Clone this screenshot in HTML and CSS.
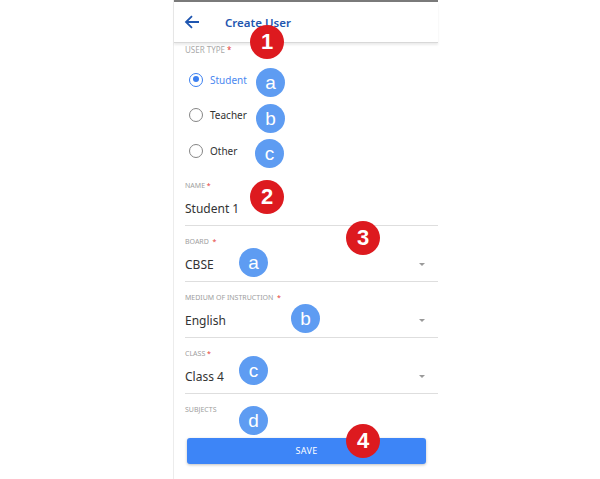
FILE: index.html
```html
<!DOCTYPE html>
<html>
<head>
<meta charset="utf-8">
<link rel="stylesheet" href="styles.css">
</head>
<body>
<div class="phone">
  <div class="topbar"></div>
  <header class="header">
    <svg class="back" width="16" height="14" viewBox="0 0 16 14"><path d="M15 7H2.5M8 1.2L2 7l6 5.8" fill="none" stroke="#1f56b0" stroke-width="1.8"/></svg>
    <span class="title">Create User</span>
  </header>
  <main class="content">
    <div class="group-label">USER TYPE <span class="req">*</span></div>
    <div class="radio-row"><span class="radio on"></span><span class="radio-text sel">Student</span></div>
    <div class="radio-row"><span class="radio"></span><span class="radio-text">Teacher</span></div>
    <div class="radio-row"><span class="radio"></span><span class="radio-text">Other</span></div>

    <div class="field first">
      <div class="flabel">NAME <span class="req">*</span></div>
      <div class="fvalue">Student 1</div>
    </div>
    <div class="field">
      <div class="flabel">BOARD &nbsp;<span class="req">*</span></div>
      <div class="fvalue">CBSE<span class="caret"></span></div>
    </div>
    <div class="field">
      <div class="flabel">MEDIUM OF INSTRUCTION &nbsp;<span class="req">*</span></div>
      <div class="fvalue">English<span class="caret"></span></div>
    </div>
    <div class="field">
      <div class="flabel">CLASS <span class="req">*</span></div>
      <div class="fvalue">Class 4<span class="caret"></span></div>
    </div>
    <div class="flabel subjects">SUBJECTS</div>
    <button class="save">SAVE</button>
  </main>

  <span class="badge red" style="left:250px;top:25px">1</span>
  <span class="badge blue" style="left:256px;top:68px">a</span>
  <span class="badge blue" style="left:256px;top:104px">b</span>
  <span class="badge blue" style="left:255px;top:139px">c</span>
  <span class="badge red" style="left:250px;top:180px">2</span>
  <span class="badge red" style="left:346px;top:221px">3</span>
  <span class="badge blue" style="left:239px;top:248px">a</span>
  <span class="badge blue" style="left:291px;top:304px">b</span>
  <span class="badge blue" style="left:239px;top:356px">c</span>
  <span class="badge blue" style="left:239px;top:406px">d</span>
  <span class="badge red" style="left:346px;top:424px">4</span>
</div>
</body>
</html>
```
FILE: styles.css
```css
* { box-sizing: border-box; }
html, body { margin: 0; padding: 0; background: #fff; }
body { font-family: "Noto Sans", "Open Sans", sans-serif; width: 600px; height: 479px; overflow: hidden; }
.phone { margin-left: 173px; width: 265px; height: 479px; border-left: 1px solid #ececec; }
.topbar { height: 2px; background: #7a7a7a; }
.header {
  height: 41px; display: flex; align-items: center; padding-left: 10px;
  border-bottom: 1px solid #d8d8d8; box-shadow: 0 2px 2px rgba(0,0,0,0.08);
}
.title { margin-left: 25px; font-size: 11.5px; font-weight: 600; color: #1f56b0; }
.content { padding-left: 11px; }
.group-label { margin-top: 1px; height: 12px; line-height: 12px; font-size: 8px; color: #a8a8a8; }
.req { color: #e53935; }
.radio-row { height: 35.5px; display: flex; align-items: center; padding-left: 4px; }
.group-label + .radio-row { margin-top: 6px; }
.radio { width: 14px; height: 14px; border: 1.5px solid #858585; border-radius: 50%; display: inline-block; position: relative; }
.radio.on { border-color: #3b7ff0; }
.radio.on::after { content: ""; position: absolute; left: 2.5px; top: 2.5px; width: 6px; height: 6px; border-radius: 50%; background: #3b7ff0; }
.radio-text { margin-left: 7px; font-size: 10px; color: #333; }
.radio-text.sel { color: #4a88f0; }
.field { border-bottom: 1px solid #dedede; padding-bottom: 6px; margin-top: 10px; }
.field.first { margin-top: 11px; }
.flabel { height: 12px; line-height: 12px; font-size: 7px; color: #a0a0a0; }
.fvalue { margin-top: 7px; height: 20px; line-height: 20px; font-size: 12px; color: #333; display: flex; align-items: center; justify-content: space-between; padding-right: 13px; }
.caret { width: 0; height: 0; border-left: 3.5px solid transparent; border-right: 3.5px solid transparent; border-top: 3.5px solid #9a9a9a; }
.subjects { margin-top: 10px; }
.save {
  display: block; margin: 22px 0 0 2px; width: 239px; height: 26px; border: none; border-radius: 3px;
  background: #3d85f7; color: #fff; font-family: inherit; font-size: 9px; letter-spacing: 0.3px;
  box-shadow: 0 1px 3px rgba(0,0,0,0.25);
}
.badge {
  position: absolute; display: flex; align-items: center; justify-content: center; border-radius: 50%;
  color: #fff; font-family: "Liberation Sans", Arial, sans-serif; font-weight: bold;
}
.badge.red { width: 34px; height: 34px; background: #dd1a1f; font-size: 22px; }
.badge.blue { width: 29px; height: 29px; background: #5e9cf2; font-size: 19px; font-weight: normal; }
```
